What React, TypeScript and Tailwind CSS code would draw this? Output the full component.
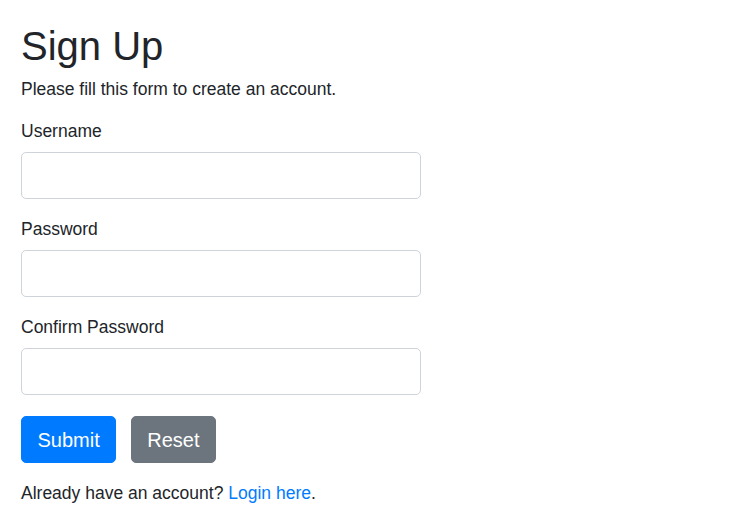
const fields = [
  { id: "username", label: "Username", type: "text" },
  { id: "password", label: "Password", type: "password" },
  { id: "confirm", label: "Confirm Password", type: "password" },
];

export default function App(): JSX.Element {
  return (
    <div className="min-h-screen bg-white font-['Liberation_Sans',Arial,sans-serif] text-[#212529]">
      <div className="w-[442px] px-[21px] pt-[23.5px]">
        <h2 className="mb-[9px] text-[40px] font-normal leading-[44px]">Sign Up</h2>
        <p className="mb-[17px] text-[17.5px] leading-[25px]">Please fill this form to create an account.</p>
        <form onSubmit={(e) => e.preventDefault()}>
          {fields.map((field) => (
            <div key={field.id} className="mb-[17.5px]">
              <label htmlFor={field.id} className="mb-[8px] block text-[17.5px] leading-[25px]">
                {field.label}
              </label>
              <input
                id={field.id}
                type={field.type}
                className="block h-[47.5px] w-[400px] rounded-[5px] border border-[#ced4da] bg-white px-[15px] text-[20px] outline-none"
              />
            </div>
          ))}
          <div className="flex gap-[15px] pt-[3.5px]">
            <button
              type="submit"
              className="h-[47px] rounded-[5px] border border-[#007bff] bg-[#007bff] px-[15.5px] text-[20px] leading-[30px] text-white"
            >
              Submit
            </button>
            <button
              type="reset"
              className="h-[47px] rounded-[5px] border border-[#6c757d] bg-[#6c757d] px-[15px] text-[20px] leading-[30px] text-white"
            >
              Reset
            </button>
          </div>
          <p className="mt-[17.5px] text-[17.5px] leading-[25px]">
            Already have an account? <a href="#" className="text-[#007bff]">Login here</a>.
          </p>
        </form>
      </div>
    </div>
  );
}
